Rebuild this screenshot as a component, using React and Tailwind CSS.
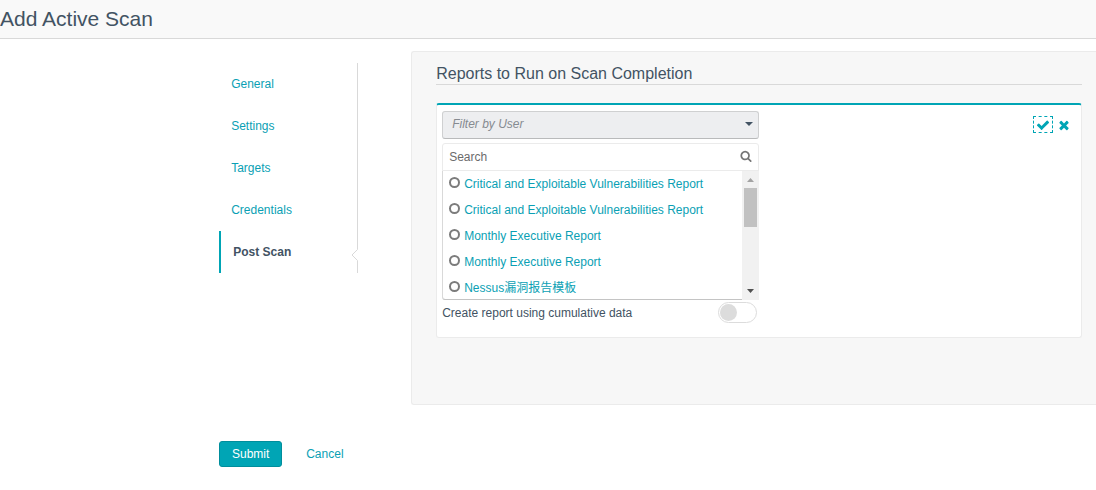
import { useState } from "react";

const NAV = ["General", "Settings", "Targets", "Credentials", "Post Scan"];

const REPORTS = [
  "Critical and Exploitable Vulnerabilities Report",
  "Critical and Exploitable Vulnerabilities Report",
  "Monthly Executive Report",
  "Monthly Executive Report",
  "Nessus漏洞报告模板",
];

function Glyph({ d, className }) {
  return (
    <svg viewBox="0 0 1792 1792" fill="currentColor" aria-hidden="true" className={className}>
      <path d={d} />
    </svg>
  );
}

const CHECK =
  "M1671 566q0 40-28 68l-724 724-136 136q-28 28-68 28t-68-28l-136-136-362-362q-28-28-28-68t28-68l136-136q28-28 68-28t68 28l294 295 656-657q28-28 68-28t68 28l136 136q28 28 28 68z";
const TIMES =
  "M1490 1322q0 40-28 68l-136 136q-28 28-68 28t-68-28l-294-294-294 294q-28 28-68 28t-68-28l-136-136q-28-28-28-68t28-68l294-294-294-294q-28-28-28-68t28-68l136-136q28-28 68-28t68 28l294 294 294-294q28-28 68-28t68 28l136 136q28 28 28 68t-28 68l-294 294 294 294q28 28 28 68z";
const SEARCH =
  "M1216 832q0-185-131.5-316.5t-316.5-131.5-316.5 131.5-131.5 316.5 131.5 316.5 316.5 131.5 316.5-131.5 131.5-316.5zm512 832q0 52-38 90t-90 38q-54 0-90-38l-343-342q-179 124-399 124-143 0-273.5-55.5t-225-150-150-225-55.5-273.5 55.5-273.5 150-225 225-150 273.5-55.5 273.5 55.5 225 150 150 225 55.5 273.5q0 220-124 399l343 343q37 37 37 90z";

function SideNav() {
  return (
    <nav aria-label="Scan sections" className="relative w-[139px] shrink-0 self-start border-r border-[#d9d9d9] mt-3">
      <ul>
        {NAV.map((name) => {
          const active = name === "Post Scan";
          return (
            <li key={name}>
              <a
                href="#"
                aria-current={active ? "page" : undefined}
                className={
                  active
                    ? "block h-[42px] border-l-2 border-[#00a5b5] pl-3 font-bold leading-[42px] text-[#425363]"
                    : "block h-[42px] pl-3 leading-[42px] text-[#0a9fb4]"
                }
              >
                {name}
              </a>
            </li>
          );
        })}
      </ul>
      <svg viewBox="0 0 7 12" aria-hidden="true" className="absolute -right-px bottom-3 h-3 w-[7px]">
        <path d="M7 0v12H6L0.5 6 6 0z" fill="#fff" />
        <path d="M6.5 0v0.5L1 6l5.5 5.500V12" fill="none" stroke="#d9d9d9" />
      </svg>
    </nav>
  );
}

function ReportPicker() {
  const [picked, setPicked] = useState(null);
  return (
    <div className="mt-1 flex flex-col rounded-[3px] border border-[#ebebeb]">
      <div className="flex h-[27px] items-center border-b border-[#ebebeb] pr-[6px]">
        <input
          type="search"
          aria-label="Search reports"
          placeholder="Search"
          className="h-full min-w-0 flex-1 bg-transparent pl-[6px] outline-none placeholder:text-[#6b6b6b]"
        />
        <Glyph d={SEARCH} className="mb-[2px] h-3 w-3 text-[#757575]" />
      </div>
      <div className="-mx-px -mb-px flex h-[129px]">
        <ul className="min-w-0 flex-1 overflow-hidden rounded-bl-[3px] border-b border-l border-[#d9d9d9] border-b-[#c4c4c4] pl-[6px]">
          {REPORTS.map((name, i) => (
            <li key={i} className="h-[26px]">
              <label className="flex h-[26px] items-center gap-1 text-[#0a9fb4]">
                <input
                  type="radio"
                  name="report"
                  checked={picked === i}
                  onChange={() => setPicked(i)}
                  className="mb-[3px] h-[11px] w-[11px] shrink-0 appearance-none rounded-full border-2 border-[#7c7c7c] checked:bg-[#00a5b5]"
                />
                {name}
              </label>
            </li>
          ))}
        </ul>
        <div aria-hidden="true" className="flex w-[17px] flex-col items-center bg-[#f1f1f1]">
          <svg viewBox="0 0 17 17" className="h-[17px] w-[17px]">
            <path d="M5 11h7L8.500 7z" fill="#a3a3a3" />
          </svg>
          <div className="h-[39px] w-[13px] bg-[#c1c1c1]" />
          <svg viewBox="0 0 17 17" className="mt-auto h-[17px] w-[17px]">
            <path d="M5 6h7L8.500 10z" fill="#505050" />
          </svg>
        </div>
      </div>
    </div>
  );
}

export default function App() {
  return (
    <div className="overflow-x-hidden bg-white font-['Liberation_Sans','Noto_Sans_CJK_SC',sans-serif] text-[12px] leading-4 text-[#425363]">
      <header className="border-b border-[#d9d9d9] bg-[#f9f9f9]">
        <h1 className="h-[38px] text-[21px] leading-[38px]">Add Active Scan</h1>
      </header>

      <main className="pl-[20%] pt-3">
        <div className="flex gap-[53px]">
          <SideNav />
          <section className="min-h-[354px] min-w-0 flex-1 rounded-l-[3px] border-y border-l border-[#ebebeb] bg-[#f7f7f7] pl-6 pr-[14px] pt-3">
            <h2 className="border-b border-[#d9d9d9] text-[16px] leading-5">Reports to Run on Scan Completion</h2>

            <div className="mt-[18px] flex min-h-[235px] items-start justify-between rounded-[3px] border border-t-2 border-[#ebebeb] border-t-[#00a5b5] bg-white px-[5px] pt-[6px]">
              <div className="w-[317px]">
                <div className="relative">
                  <select
                    aria-label="Filter by User"
                    className="block h-7 w-full appearance-none rounded-[3px] border border-[#cfd0d1] border-b-[#b9babb] bg-[#edeef0] pb-[2px] pl-[9px] pr-6 italic text-[#868b91]"
                  >
                    <option>Filter by User</option>
                  </select>
                  <svg viewBox="0 0 8 4" aria-hidden="true" className="pointer-events-none absolute right-[6px] top-[11px] h-1 w-2">
                    <path d="M0 0h8L4 4z" fill="#425363" />
                  </svg>
                </div>

                <ReportPicker />

                <div className="flex items-center justify-between pr-[2px] pt-[2px]">
                  <label htmlFor="cumulative">Create report using cumulative data</label>
                  <input
                    id="cumulative"
                    type="checkbox"
                    role="switch"
                    className="flex h-[21px] w-[39px] appearance-none items-center rounded-full border border-[#dcdcdc] px-px before:h-[17px] before:w-[17px] before:rounded-full before:bg-[#dcdcdc] checked:justify-end checked:before:bg-[#00a5b5]"
                  />
                </div>
              </div>

              <div className="mr-[5px] mt-[5px] flex items-center gap-1 text-[#00a5b5]">
                <button
                  type="button"
                  aria-label="Confirm"
                  className="flex h-[17px] w-5 items-center justify-center border border-dashed border-[#00a5b5]"
                >
                  <Glyph d={CHECK} className="h-[14px] w-[14px] shrink-0" />
                </button>
                <button type="button" aria-label="Remove" className="flex h-[17px] w-[14px] items-center justify-center">
                  <Glyph d={TIMES} className="h-[14px] w-[14px] shrink-0" />
                </button>
              </div>
            </div>
          </section>
        </div>

        <div className="flex items-center gap-6 pb-5 pt-9">
          <button
            type="submit"
            className="h-[26px] w-[63px] rounded-[3px] border border-[#008e9c] bg-[#00a5b5] text-white"
          >
            Submit
          </button>
          <a href="#" className="text-[#0a9fb4]">
            Cancel
          </a>
        </div>
      </main>
    </div>
  );
}
